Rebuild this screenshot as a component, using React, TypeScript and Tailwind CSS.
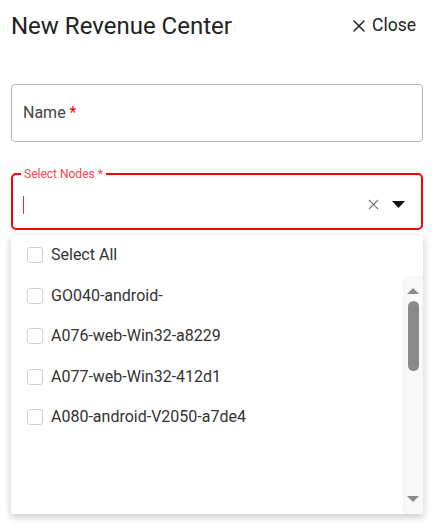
import { X } from "lucide-react";

const nodes = [
  "GO040-android-",
  "A076-web-Win32-a8229",
  "A077-web-Win32-412d1",
  "A080-android-V2050-a7de4",
];

function Checkbox() {
  return <span className="size-4 shrink-0 rounded-[3px] border border-[#d0d0d0] bg-white" />;
}

function Option({ label }: { label: string }) {
  return (
    <div className="flex h-[40.5px] items-center gap-2 pl-4 text-[16px] text-[#333]">
      <Checkbox />
      <span>{label}</span>
    </div>
  );
}

export default function App() {
  return (
    <div
      className="h-[531px] w-[446px] overflow-hidden bg-white"
      style={{ fontFamily: "Roboto, 'Open Sans', sans-serif" }}
    >
      {/* Header */}
      <div className="flex h-[51px] items-center justify-between pl-[11px] pr-[30px]">
        <h1 className="text-[24px] font-normal leading-none text-[#222]">New Revenue Center</h1>
        <button className="flex items-center gap-[3px] text-[17.5px] text-[#222]">
          <X className="size-[20px]" strokeWidth={1.8} />
          Close
        </button>
      </div>

      <div className="pl-[11px] pr-[23px]">
        {/* Name */}
        <div className="mt-[33px] flex h-[58px] items-center rounded-[4px] border border-[#b5b5b5] px-[11px]">
          <span className="text-[16px] text-[#444]">
            Name <span className="text-[#f00]">*</span>
          </span>
        </div>

        {/* Select nodes */}
        <div className="relative mt-[31px] flex h-[57px] items-center rounded-[5px] border-2 border-[#f00] pl-[10px] pr-[16px]">
          <span className="absolute -top-[9px] left-[8px] bg-white px-[3px] text-[12px] leading-4 text-[#f04848]">
            Select Nodes *
          </span>
          <span className="mt-[6px] h-[18px] w-px bg-[#d33]" />
          <div className="ml-auto mt-[6px] flex items-center gap-[10px]">
            <X className="size-[17px] text-[#777]" strokeWidth={1.5} />
            <svg width="13" height="7" viewBox="0 0 13 7">
              <path d="M0 0h13L6.5 7z" fill="#111" />
            </svg>
          </div>
        </div>

        {/* Dropdown */}
        <div className="mt-[5px] flex h-[279px] flex-col bg-white shadow-[0_3px_8px_rgba(0,0,0,0.22)]">
          <Option label="Select All" />
          <div className="flex flex-1">
            <div className="flex-1">
              {nodes.map((n) => (
                <Option key={n} label={n} />
              ))}
            </div>
            <div className="flex w-[20px] flex-col items-center bg-[#f8f8f8] py-[12px]">
              <svg width="12" height="6" viewBox="0 0 12 6">
                <path d="M6 0l6 6H0z" fill="#8a8a8a" />
              </svg>
              <div className="mt-[7px] h-[70px] w-[11px] rounded-full bg-[#8a8a8a]" />
              <div className="flex-1" />
              <svg width="12" height="6" viewBox="0 0 12 6">
                <path d="M0 0h12L6 6z" fill="#8a8a8a" />
              </svg>
            </div>
          </div>
        </div>
      </div>
    </div>
  );
}
